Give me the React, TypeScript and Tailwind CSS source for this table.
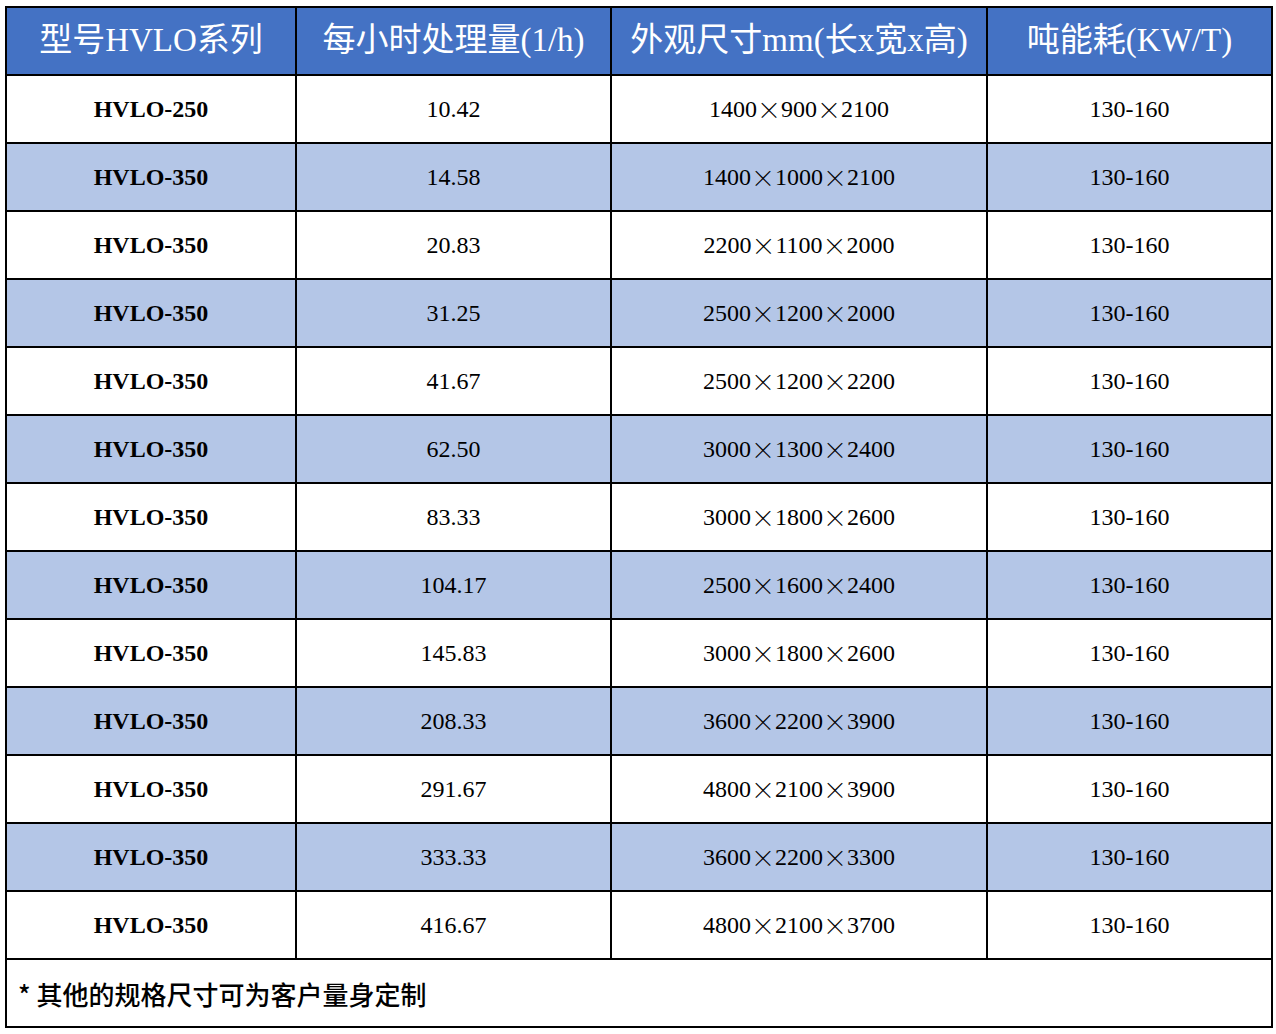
const rows: [string, string, [string, string, string]][] = [
  ['HVLO-250', '10.42', ['1400', '900', '2100']],
  ['HVLO-350', '14.58', ['1400', '1000', '2100']],
  ['HVLO-350', '20.83', ['2200', '1100', '2000']],
  ['HVLO-350', '31.25', ['2500', '1200', '2000']],
  ['HVLO-350', '41.67', ['2500', '1200', '2200']],
  ['HVLO-350', '62.50', ['3000', '1300', '2400']],
  ['HVLO-350', '83.33', ['3000', '1800', '2600']],
  ['HVLO-350', '104.17', ['2500', '1600', '2400']],
  ['HVLO-350', '145.83', ['3000', '1800', '2600']],
  ['HVLO-350', '208.33', ['3600', '2200', '3900']],
  ['HVLO-350', '291.67', ['4800', '2100', '3900']],
  ['HVLO-350', '333.33', ['3600', '2200', '3300']],
  ['HVLO-350', '416.67', ['4800', '2100', '3700']],
];

const headers = ['型号HVLO系列', '每小时处理量(1/h)', '外观尺寸mm(长x宽x高)', '吨能耗(KW/T)'];

function Times() {
  return (
    <span className="inline-block w-[24px] text-center font-['Noto_Sans_CJK_SC',sans-serif] font-light">×</span>
  );
}

export default function App() {
  return (
    <div className="w-[1276px] h-[1034px] bg-white pt-[6px] pl-[5px] font-['Liberation_Serif','Noto_Sans_CJK_SC',serif]">
      <div className="w-[1268px] border-l-2 border-t-2 border-black">
        {/* header */}
        <div className="grid grid-cols-[290px_315px_376px_285px] bg-[#4472c4] text-white text-[33px]">
          {headers.map((h) => (
            <div key={h} className="h-[68px] border-r-2 border-b-2 border-black flex items-center justify-center">
              {h}
            </div>
          ))}
        </div>

        {rows.map(([model, rate, dims], i) => (
          <div
            key={i}
            className={`grid grid-cols-[290px_315px_376px_285px] text-[24px] text-black ${i % 2 === 1 ? 'bg-[#b4c6e7]' : 'bg-white'}`}
          >
            <div className="h-[68px] border-r-2 border-b-2 border-black flex items-center justify-center font-bold">
              {model}
            </div>
            <div className="h-[68px] border-r-2 border-b-2 border-black flex items-center justify-center">
              {rate}
            </div>
            <div className="h-[68px] border-r-2 border-b-2 border-black flex items-center justify-center">
              {dims[0]}
              <Times />
              {dims[1]}
              <Times />
              {dims[2]}
            </div>
            <div className="h-[68px] border-r-2 border-b-2 border-black flex items-center justify-center">
              130-160
            </div>
          </div>
        ))}

        {/* footnote */}
        <div className="h-[68px] border-r-2 border-b-2 border-black flex items-center pl-[11px] text-[26px] font-medium text-black font-['Noto_Sans_CJK_SC',sans-serif]">
          * 其他的规格尺寸可为客户量身定制
        </div>
      </div>
    </div>
  );
}
